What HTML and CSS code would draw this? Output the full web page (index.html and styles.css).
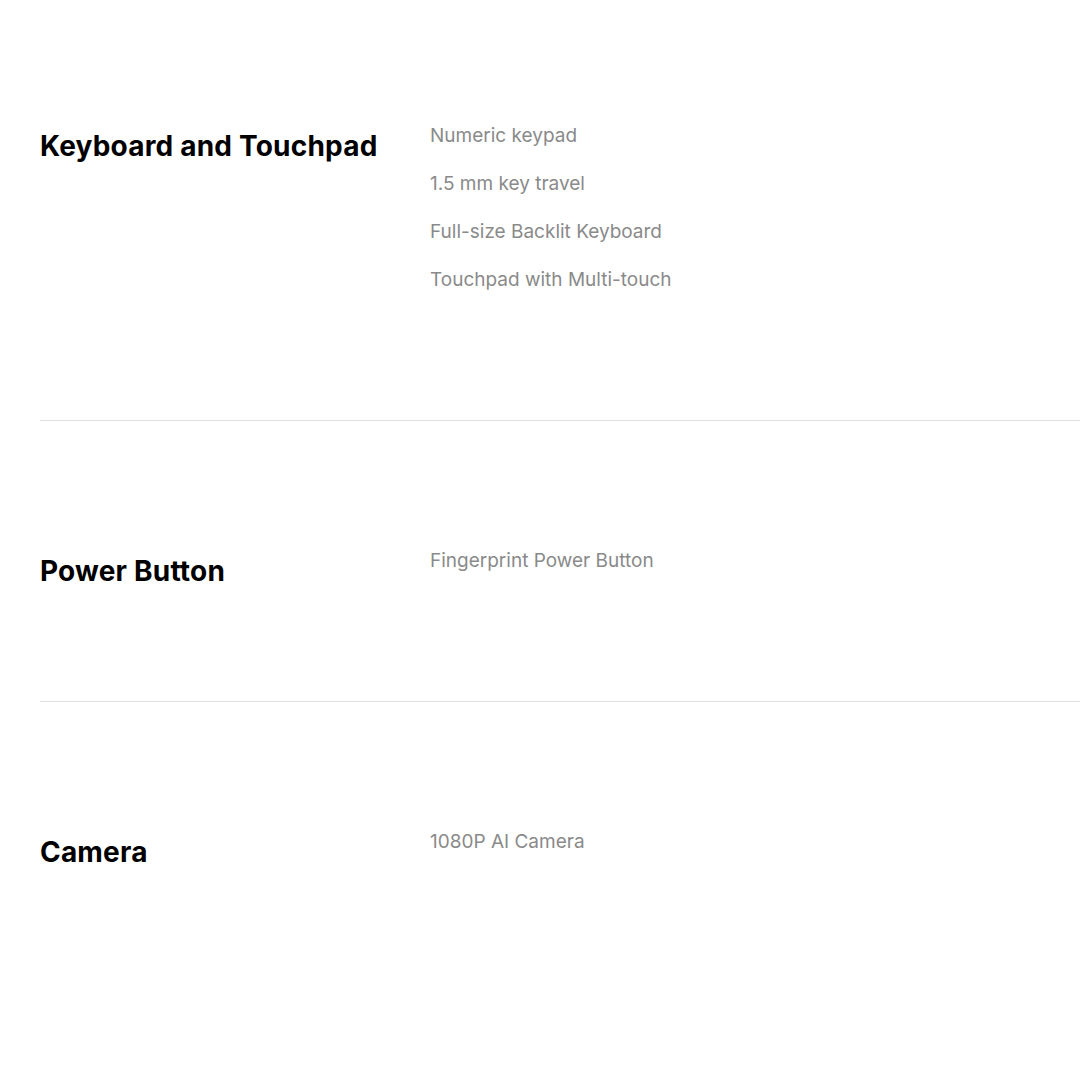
FILE: index.html
```html
<!DOCTYPE html>
<html lang="en">

<head>
    <meta charset="UTF-8">
    <meta name="viewport" content="width=device-width, initial-scale=1.0">
    <title>Specs</title>
    <link rel="stylesheet" href="styles.css">
</head>

<body>
    <div class="specs">
        <div class="spec-row">
            <h2 class="spec-title">Keyboard and Touchpad</h2>
            <ul class="spec-list">
                <li>Numeric keypad</li>
                <li>1.5 mm key travel</li>
                <li>Full-size Backlit Keyboard</li>
                <li>Touchpad with Multi-touch</li>
            </ul>
        </div>
        <div class="spec-row">
            <h2 class="spec-title">Power Button</h2>
            <ul class="spec-list">
                <li>Fingerprint Power Button</li>
            </ul>
        </div>
        <div class="spec-row">
            <h2 class="spec-title">Camera</h2>
            <ul class="spec-list">
                <li>1080P AI Camera</li>
            </ul>
        </div>
    </div>
</body>

</html>
```

FILE: styles.css
```css
body {
    margin: 0;
    padding: 0;
    background-color: #fff;
    font-family: Inter, "Noto Sans", sans-serif;
    overflow: hidden;
}

.specs {
    padding-left: 40px;
}

.spec-row {
    display: grid;
    grid-template-columns: 390px 1fr;
    padding: 116px 0;
    border-bottom: 1px solid #e0e0e0;
}

.spec-row:first-child {
    padding-top: 112px;
}

.spec-row:last-child {
    border-bottom: none;
}

.spec-title {
    margin: 0;
    padding-top: 20px;
    font-size: 28px;
    font-weight: 700;
    line-height: 28px;
    letter-spacing: 0.2px;
    color: #000;
}

.spec-list {
    list-style: none;
    margin: 0;
    padding: 0;
}

.spec-list li {
    font-size: 19px;
    line-height: 48px;
    color: #8a8a8a;
}
```
